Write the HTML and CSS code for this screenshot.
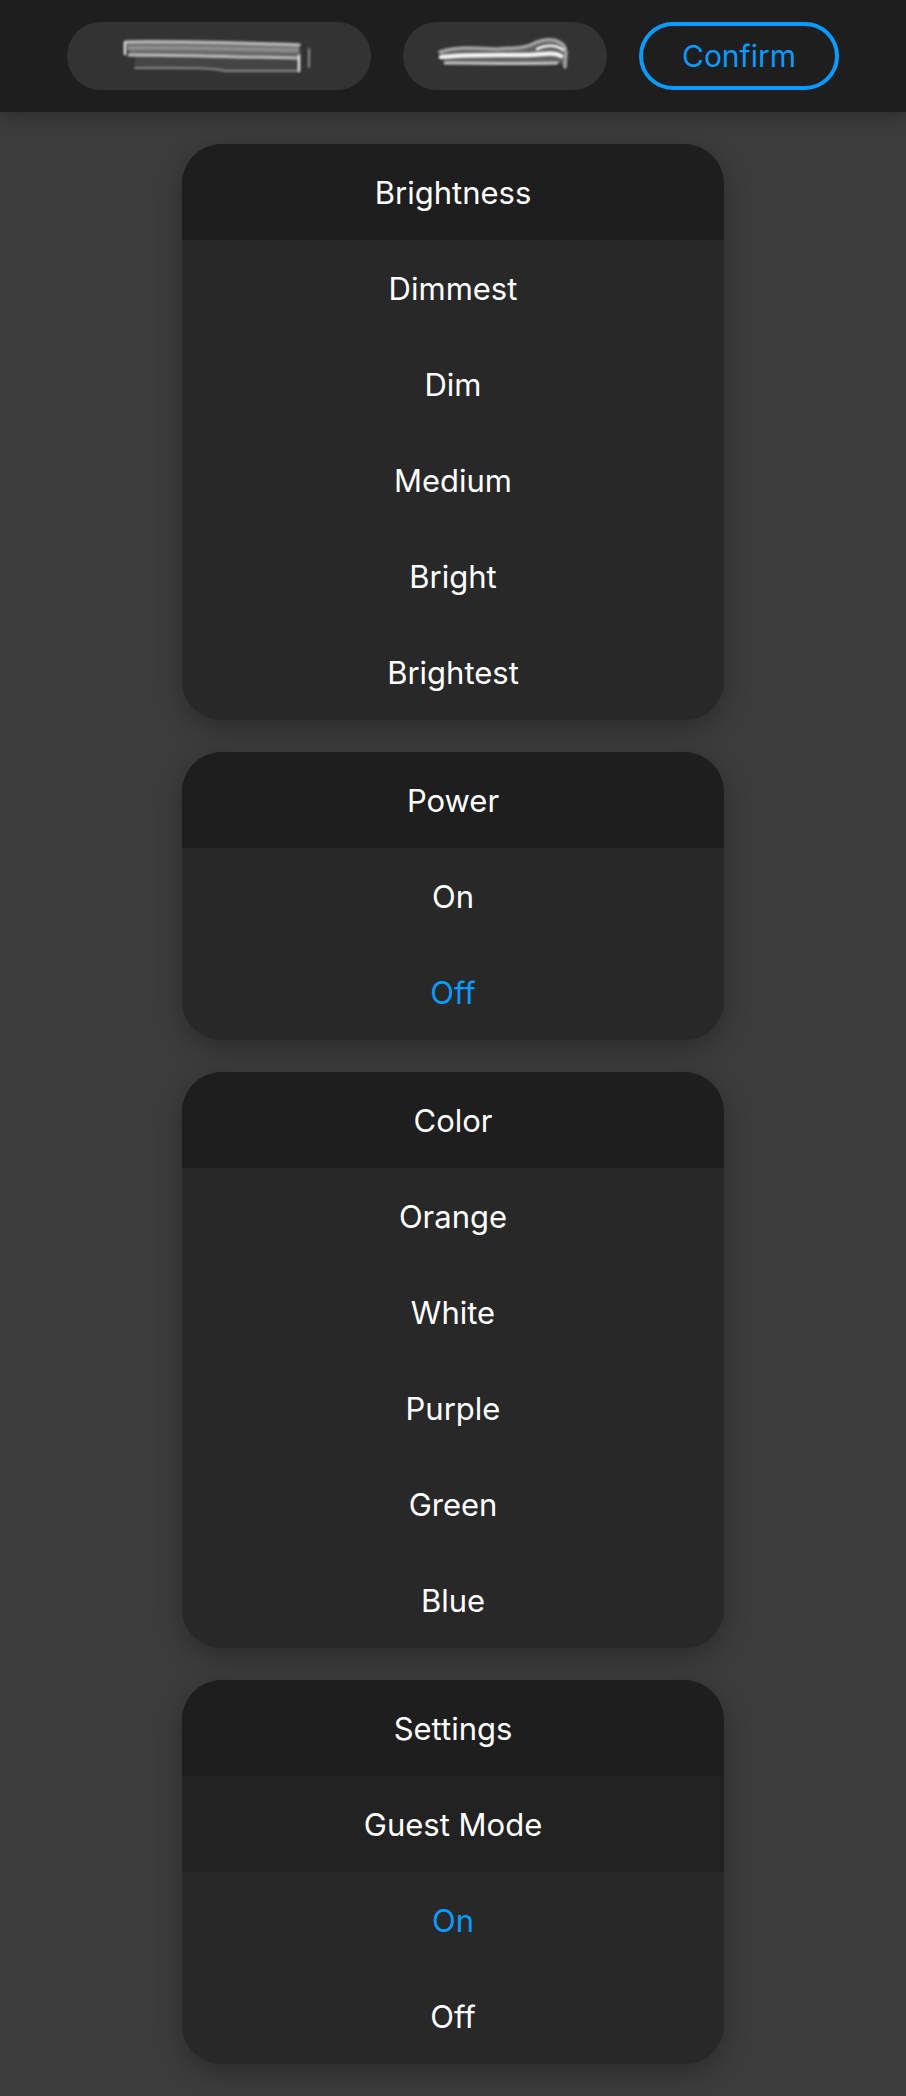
FILE: index.html
```html
<!DOCTYPE html>
<html lang="en">
<head>
<meta charset="utf-8">
<title>Controls</title>
<link rel="stylesheet" href="styles.css">
</head>
<body>
<header class="topbar">
  <div class="pill pill-wide">
    <svg class="scribble" width="196" height="38" viewBox="0 0 196 38">
      <g fill="none" stroke-linecap="round">
        <path d="M5 5 C60 4 110 6 178 8 L180 19 L8 17 Z" fill="#6a6a6a" stroke="none"/>
        <path d="M14 19 L178 20 L178 34 L104 34 C84 31 60 31 14 31 Z" fill="#454545" stroke="none"/>
        <path d="M4 5 L4 17" stroke="#eaeaea" stroke-width="2.4"/>
        <path d="M6 5 C60 4 110 6 178 8" stroke="#b5b5b5" stroke-width="3.5"/>
        <path d="M8 11 C60 10 110 12 176 13" stroke="#8e8e8e" stroke-width="4"/>
        <path d="M8 18 C60 18 110 20 176 21" stroke="#bdbdbd" stroke-width="3"/>
        <path d="M14 31 C60 31 90 30 104 34 L176 34" stroke="#8a8a8a" stroke-width="2"/>
        <path d="M178 19 L178 34" stroke="#eeeeee" stroke-width="2.4"/>
        <path d="M188 12 L188 30" stroke="#9a9a9a" stroke-width="1.8"/>
      </g>
    </svg>
  </div>
  <div class="pill pill-narrow">
    <svg class="scribble" width="136" height="38" viewBox="0 0 136 38">
      <g fill="none" stroke-linecap="round">
        <path d="M3 15 C20 9 40 11 60 12 C80 11 90 11 100 5 C115 -1 130 4 130 15 L128 32 L124 26 L8 26 Z" fill="#626262" stroke="none"/>
        <path d="M3 15 C20 9 40 11 60 12 C80 11 90 11 100 5 C115 0 128 4 129 15 L128 30" stroke="#a5a5a5" stroke-width="3.5"/>
        <path d="M4 20 C30 17 70 18 90 18 C110 17 118 15 124 19" stroke="#f4f4f4" stroke-width="4.5"/>
        <path d="M8 26 C40 26 80 27 120 26" stroke="#c4c4c4" stroke-width="3"/>
        <path d="M100 12 C110 7 120 8 126 13" stroke="#f6f6f6" stroke-width="2.6"/>
      </g>
    </svg>
  </div>
  <button class="confirm">Confirm</button>
</header>

<main class="content">
  <section class="card">
    <div class="card-title">Brightness</div>
    <div class="option">Dimmest</div>
    <div class="option">Dim</div>
    <div class="option">Medium</div>
    <div class="option">Bright</div>
    <div class="option">Brightest</div>
  </section>

  <section class="card">
    <div class="card-title">Power</div>
    <div class="option">On</div>
    <div class="option selected">Off</div>
  </section>

  <section class="card">
    <div class="card-title">Color</div>
    <div class="option">Orange</div>
    <div class="option">White</div>
    <div class="option">Purple</div>
    <div class="option">Green</div>
    <div class="option">Blue</div>
  </section>

  <section class="card">
    <div class="card-title">Settings</div>
    <div class="option subhead">Guest Mode</div>
    <div class="option selected">On</div>
    <div class="option">Off</div>
  </section>
</main>
</body>
</html>
```

FILE: styles.css
```css
* {
  box-sizing: border-box;
}

html, body {
  margin: 0;
  padding: 0;
}

body {
  background: #3c3c3c;
  font-family: "Inter", "Liberation Sans", sans-serif;
  color: #ffffff;
  -webkit-font-smoothing: antialiased;
}

.topbar {
  height: 112px;
  background: #1e1e1e;
  display: flex;
  align-items: center;
  justify-content: center;
  gap: 32px;
  box-shadow: 0 4px 16px rgba(0, 0, 0, 0.25);
  position: relative;
  z-index: 1;
}

.pill {
  height: 68px;
  border-radius: 34px;
  background: #333333;
  display: flex;
  align-items: center;
  justify-content: center;
}

.pill-wide {
  width: 304px;
}

.pill-narrow {
  width: 204px;
}

.scribble {
  display: block;
  filter: blur(0.8px);
}

.confirm {
  width: 200px;
  height: 68px;
  border-radius: 34px;
  border: 4px solid #0a9bff;
  background: transparent;
  color: #0a9bff;
  font-family: "Inter", "Liberation Sans", sans-serif;
  font-size: 30px;
  font-weight: 400;
  padding: 0;
  cursor: pointer;
}

.content {
  display: flex;
  flex-direction: column;
  align-items: center;
  gap: 32px;
  padding: 32px 0;
}

.card {
  width: 542px;
  border-radius: 40px;
  overflow: hidden;
  background: #282828;
  box-shadow: 0 8px 24px rgba(0, 0, 0, 0.28);
}

.card-title,
.option {
  height: 96px;
  display: flex;
  align-items: center;
  justify-content: center;
  font-size: 31px;
  font-weight: 400;
}

.card-title {
  background: #1e1e1e;
}

.option {
  background: #282828;
}

.option.subhead {
  background: #222222;
}

.option.selected {
  color: #0a9bff;
}
```
